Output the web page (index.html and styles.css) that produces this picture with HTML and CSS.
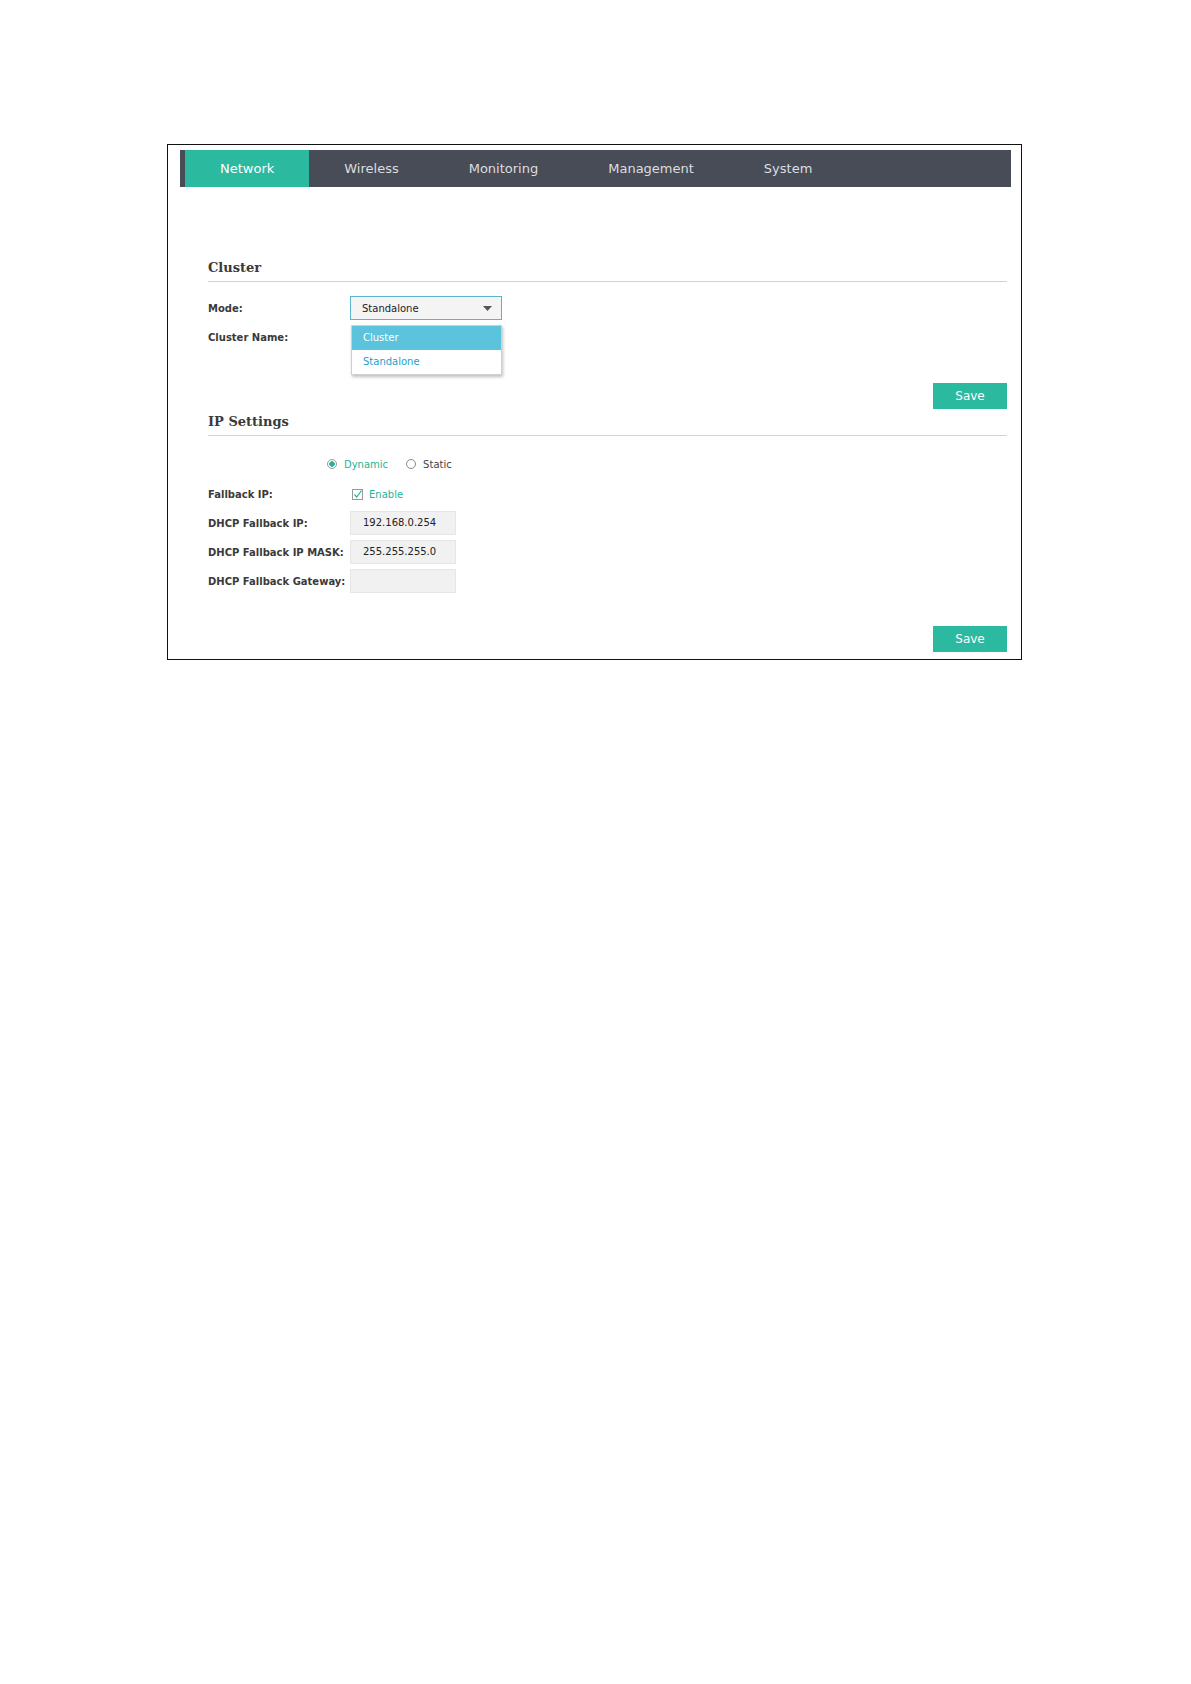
FILE: index.html
```html
<!DOCTYPE html>
<html lang="en">
<head>
<meta charset="UTF-8">
<title>Network - Cluster</title>
<link rel="stylesheet" href="styles.css">
</head>
<body>
<div class="frame">
  <nav class="menu">
    <a class="tab active">Network</a>
    <a class="tab">Wireless</a>
    <a class="tab">Monitoring</a>
    <a class="tab">Management</a>
    <a class="tab">System</a>
  </nav>

  <div class="content">
    <h2 class="section-title first">Cluster</h2>
    <div class="row">
      <label class="label">Mode:</label>
      <div class="select-wrap">
        <div class="select">
          <span>Standalone</span>
          <svg class="arrow" width="9" height="5" viewBox="0 0 9 5"><path d="M0 0h9L4.5 5z" fill="#555"/></svg>
        </div>
        <ul class="dropdown">
          <li class="picked">Cluster</li>
          <li>Standalone</li>
        </ul>
      </div>
    </div>
    <div class="row">
      <label class="label">Cluster Name:</label>
    </div>
    <div class="actions first-save">
      <button class="save">Save</button>
    </div>

    <h2 class="section-title">IP Settings</h2>
    <div class="row radio-row">
      <span class="radio checked"><i></i>Dynamic</span>
      <span class="radio"><i></i>Static</span>
    </div>
    <div class="row spaced">
      <label class="label">Fallback IP:</label>
      <span class="check">
        <svg width="11" height="11" viewBox="0 0 11 11"><rect x="0.5" y="0.5" width="10" height="10" fill="#fff" stroke="#999"/><path d="M2.5 5.5l2.2 2.6L9.5 1.5" fill="none" stroke="#26b39a" stroke-width="1.2"/></svg>
        Enable
      </span>
    </div>
    <div class="row">
      <label class="label">DHCP Fallback IP:</label>
      <div class="field">192.168.0.254</div>
    </div>
    <div class="row">
      <label class="label">DHCP Fallback IP MASK:</label>
      <div class="field">255.255.255.0</div>
    </div>
    <div class="row">
      <label class="label">DHCP Fallback Gateway:</label>
      <div class="field"></div>
    </div>
    <div class="actions last-save">
      <button class="save">Save</button>
    </div>
  </div>
</div>
</body>
</html>
```

FILE: styles.css
```css
body {
  margin: 0;
  background: #fff;
  font-family: "DejaVu Sans", Verdana, sans-serif;
  color: #333;
}
.frame {
  width: 853px;
  margin: 144px 0 0 167px;
  border: 1px solid #111;
  padding-top: 5px;
}
.menu {
  display: flex;
  height: 37px;
  margin: 0 10px 0 12px;
  padding-left: 5px;
  background: #474c56;
}
.tab {
  padding: 0 35px;
  line-height: 37px;
  font-size: 13px;
  color: #dcdde0;
  cursor: pointer;
}
.tab.active {
  background: #2bb9a0;
  color: #fff;
}
.content {
  padding: 0 14px 7px 40px;
}
.section-title {
  margin: 3px 0 0;
  padding-bottom: 3px;
  border-bottom: 1px solid #d2d2d2;
  font-family: "DejaVu Serif", Georgia, serif;
  font-size: 13px;
  line-height: 20px;
  color: #3a3a3a;
}
.section-title.first {
  margin-top: 71px;
}
.row {
  display: flex;
  align-items: center;
  height: 24px;
  margin-top: 5px;
  font-size: 10px;
}
.row.spaced {
  margin-top: 6px;
}
.section-title + .row {
  margin-top: 14px;
}
.section-title + .radio-row {
  margin-top: 16px;
}
.label {
  width: 142px;
  flex-shrink: 0;
  font-weight: bold;
  color: #3a3a3a;
}
.select-wrap {
  position: relative;
}
.select {
  display: flex;
  align-items: center;
  justify-content: space-between;
  box-sizing: border-box;
  width: 152px;
  height: 24px;
  padding: 0 9px 0 11px;
  border: 1px solid #5ab5c8;
  background: #f4f4f4;
  color: #222;
}
.dropdown {
  position: absolute;
  top: 29px;
  left: 1px;
  width: 149px;
  margin: 0;
  padding: 0;
  list-style: none;
  background: #fff;
  border: 1px solid #d0d0d0;
  box-shadow: 1px 2px 3px rgba(0, 0, 0, 0.25);
  z-index: 2;
}
.dropdown li {
  height: 24px;
  line-height: 24px;
  padding-left: 11px;
  color: #1c9fcf;
}
.dropdown li.picked {
  background: #5bc4dc;
  color: #fff;
}
.radio-row {
  padding-left: 119px;
}
.radio {
  display: flex;
  align-items: center;
  margin-right: 18px;
  color: #444;
}
.radio i {
  box-sizing: border-box;
  width: 10px;
  height: 10px;
  margin-right: 7px;
  border: 1px solid #888;
  border-radius: 50%;
  background: #fff;
}
.radio.checked {
  color: #26b39a;
}
.radio.checked i {
  border-color: #999;
  background: radial-gradient(circle, #26b39a 0 2.5px, #fff 3px);
}
.check {
  display: flex;
  align-items: center;
  gap: 6px;
  margin-left: 2px;
  color: #26b39a;
}
.field {
  box-sizing: border-box;
  width: 106px;
  height: 24px;
  line-height: 22px;
  padding-left: 12px;
  border: 1px solid #e6e6e6;
  background: #f1f1f1;
  color: #222;
}
.actions {
  display: flex;
  justify-content: flex-end;
}
.first-save {
  margin-top: 34px;
}
.last-save {
  margin-top: 33px;
}
.save {
  width: 74px;
  height: 26px;
  border: none;
  background: #2bb9a0;
  color: #fff;
  font-family: "DejaVu Sans", Verdana, sans-serif;
  font-size: 12px;
  cursor: pointer;
}
```
